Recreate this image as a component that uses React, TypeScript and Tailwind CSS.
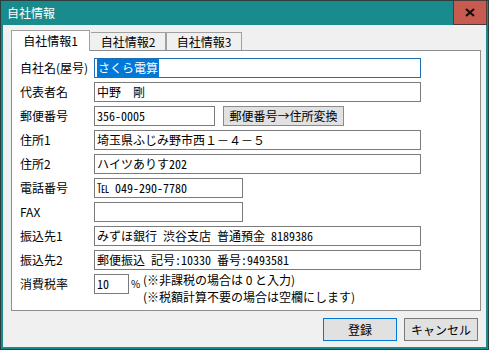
import React from "react";

const F = { fontFamily: '"Noto Sans CJK JP", "Noto Sans", sans-serif' };
const M = { fontFamily: '"Noto Sans Mono CJK JP", "Noto Sans CJK JP", monospace' };

function Field({ w, children, focused }: { w: number; children?: React.ReactNode; focused?: boolean }) {
  return (
    <div
      className={`h-[20px] bg-white border flex items-center pl-[2px] text-[12px] text-black whitespace-nowrap overflow-hidden ${
        focused ? "border-[#1e6fb5]" : "border-[#7a7a7a]"
      }`}
      style={{ width: w, ...M }}
    >
      {children}
    </div>
  );
}

function Row({ label, children }: { label: string; children: React.ReactNode }) {
  return (
    <div className="flex items-center h-[20px]">
      <div className="w-[74px] text-[12px] text-black leading-none whitespace-nowrap">{label}</div>
      {children}
    </div>
  );
}

export default function App() {
  return (
    <div className="w-[489px] h-[350px] bg-[#1a8b8d] border border-[#2d3d3e] flex flex-col" style={F}>
      {/* title bar */}
      <div className="h-[24px] flex items-center justify-between shrink-0">
        <div className="pl-[6px] text-white text-[12px] leading-none">自社情報</div>
        <div className="w-[34px] h-[25px] -mt-px mr-[1px] bg-[#c75b50] border border-[#4a3c3c] flex items-center justify-center">
          <svg width="10" height="9" viewBox="0 0 10 9">
            <path d="M1 1 L9 8 M9 1 L1 8" stroke="#111" strokeWidth="2.2" />
          </svg>
        </div>
      </div>
      {/* client */}
      <div className="flex-1 mx-[2px] mb-[2px] bg-[#f0f0f0] flex flex-col pl-[8px] pt-[5px]">
        {/* tabs */}
        <div className="flex items-end h-[20px]">
          <div className="relative z-10 w-[79px] h-[21px] -mb-px bg-white border border-b-0 border-[#a0a0a0] flex items-center justify-center text-[12px] leading-none text-black">
            自社情報1
          </div>
          <div className="w-[75px] ml-[1px] h-[18px] bg-[#f0f0f0] border border-b-0 border-l-0 border-[#a0a0a0] flex items-center justify-center text-[12px] leading-none text-black">
            自社情報2
          </div>
          <div className="w-[76px] h-[18px] bg-[#f0f0f0] border border-b-0 border-[#a0a0a0] flex items-center justify-center text-[12px] leading-none text-black">
            自社情報3
          </div>
        </div>
        {/* panel */}
        <div className="w-[470px] h-[261px] bg-white border border-[#8e8e8e] pt-[7px] pl-[8px] flex flex-col gap-[4px]">
          <Row label="自社名(屋号)">
            <Field w={327} focused>
              <span className="bg-[#0078d7] text-white px-[1px]" style={F}>さくら電算</span>
            </Field>
          </Row>
          <Row label="代表者名">
            <Field w={327}>中野　剛</Field>
          </Row>
          <Row label="郵便番号">
            <Field w={121}>356-0005</Field>
            <div className="ml-[8px] w-[121px] h-[20px] bg-[#e1e1e1] border border-[#8a8a8a] flex items-center justify-center text-[12px] leading-none text-black">
              郵便番号→住所変換
            </div>
          </Row>
          <Row label="住所1">
            <Field w={327}>埼玉県ふじみ野市西１－４－５</Field>
          </Row>
          <Row label="住所2">
            <Field w={327}>ハイツありす202</Field>
          </Row>
          <Row label="電話番号">
            <Field w={149}>℡ 049-290-7780</Field>
          </Row>
          <Row label="FAX">
            <Field w={149} />
          </Row>
          <Row label="振込先1">
            <Field w={327}>みずほ銀行 渋谷支店 普通預金 8189386</Field>
          </Row>
          <Row label="振込先2">
            <Field w={327}>郵便振込 記号:10330 番号:9493581</Field>
          </Row>
          <div className="flex items-start h-[20px]">
            <div className="w-[74px] h-[20px] flex items-center text-[12px] leading-none text-black">消費税率</div>
            <Field w={35}>10</Field>
            <div className="h-[20px] flex items-center ml-[2px] w-[12px] text-[10px] leading-none text-black">%</div>
            <div className="-mt-[3px] text-[12px] leading-[17px] text-black whitespace-nowrap">
              <div>(※非課税の場合は 0 と入力)</div>
              <div>(※税額計算不要の場合は空欄にします)</div>
            </div>
          </div>
        </div>
        {/* buttons */}
        <div className="flex justify-end gap-[7px] pr-[8px] mt-[7px]">
          <div className="w-[74px] h-[23px] bg-[#e1e1e1] border border-[#0078d7] flex items-center justify-center text-[12px] leading-none text-black">
            登録
          </div>
          <div className="w-[74px] h-[23px] bg-[#e1e1e1] border border-[#7a7a7a] flex items-center justify-center text-[12px] leading-none text-black">
            キャンセル
          </div>
        </div>
      </div>
    </div>
  );
}
